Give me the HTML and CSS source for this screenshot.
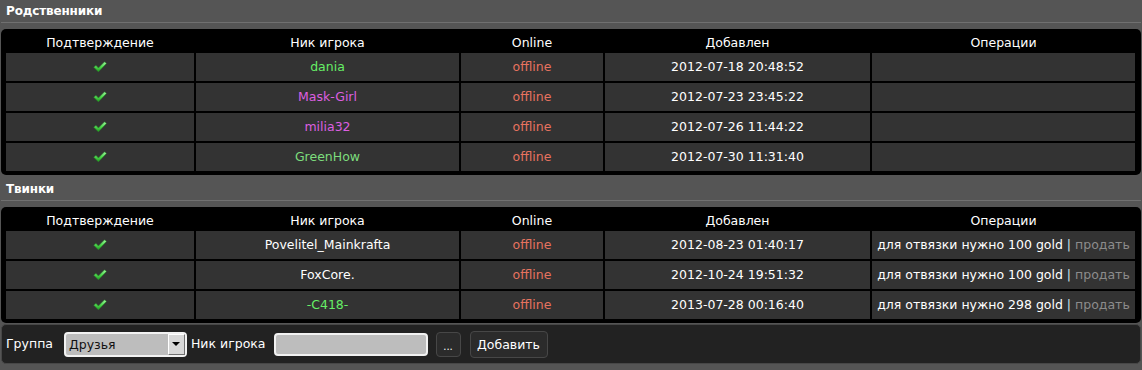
FILE: index.html
```html
<!DOCTYPE html>
<html lang="ru">
<head>
<meta charset="utf-8">
<title>Родственники</title>
<link rel="stylesheet" href="styles.css">
</head>
<body>
<svg width="0" height="0" class="defs" aria-hidden="true">
  <defs>
    <linearGradient id="gck" x1="0" y1="0" x2="0" y2="1">
      <stop offset="0" stop-color="#a6f7a6"/>
      <stop offset="0.5" stop-color="#4fd94f"/>
      <stop offset="1" stop-color="#1f9a1f"/>
    </linearGradient>
    <symbol id="check" viewBox="0 0 14 12">
      <path d="M0.8 6.2 L3 4.4 L5.4 7 L11.6 0.8 L13.4 2.6 L5.4 10.8 Z" fill="url(#gck)" stroke="#2a8f2a" stroke-width="0.6" stroke-linejoin="round"/>
    </symbol>
  </defs>
</svg>

<section class="section">
  <h2 class="title">Родственники</h2>
  <div class="box">
    <table class="grid">
      <colgroup><col class="c1"><col class="c2"><col class="c3"><col class="c4"><col class="c5"></colgroup>
      <thead><tr><th>Подтверждение</th><th>Ник игрока</th><th>Online</th><th>Добавлен</th><th>Операции</th></tr></thead>
      <tbody>
        <tr><td><svg class="ck"><use href="#check"/></svg></td><td class="n-green">dania</td><td class="off">offline</td><td>2012-07-18 20:48:52</td><td></td></tr>
        <tr><td><svg class="ck"><use href="#check"/></svg></td><td class="n-pink">Mask-Girl</td><td class="off">offline</td><td>2012-07-23 23:45:22</td><td></td></tr>
        <tr><td><svg class="ck"><use href="#check"/></svg></td><td class="n-pink">milia32</td><td class="off">offline</td><td>2012-07-26 11:44:22</td><td></td></tr>
        <tr><td><svg class="ck"><use href="#check"/></svg></td><td class="n-green2">GreenHow</td><td class="off">offline</td><td>2012-07-30 11:31:40</td><td></td></tr>
      </tbody>
    </table>
  </div>
</section>

<section class="section">
  <h2 class="title">Твинки</h2>
  <div class="box">
    <table class="grid">
      <colgroup><col class="c1"><col class="c2"><col class="c3"><col class="c4"><col class="c5"></colgroup>
      <thead><tr><th>Подтверждение</th><th>Ник игрока</th><th>Online</th><th>Добавлен</th><th>Операции</th></tr></thead>
      <tbody>
        <tr><td><svg class="ck"><use href="#check"/></svg></td><td>Povelitel_Mainkrafta</td><td class="off">offline</td><td>2012-08-23 01:40:17</td><td>для отвязки нужно 100 gold <span class="sep">|</span> <span class="sell">продать</span></td></tr>
        <tr><td><svg class="ck"><use href="#check"/></svg></td><td>FoxCore.</td><td class="off">offline</td><td>2012-10-24 19:51:32</td><td>для отвязки нужно 100 gold <span class="sep">|</span> <span class="sell">продать</span></td></tr>
        <tr><td><svg class="ck"><use href="#check"/></svg></td><td class="n-green">-C418-</td><td class="off">offline</td><td>2013-07-28 00:16:40</td><td>для отвязки нужно 298 gold <span class="sep">|</span> <span class="sell">продать</span></td></tr>
      </tbody>
    </table>
  </div>
  <form class="panel">
    <label class="lbl lbl-group">Группа</label>
    <div class="select"><span class="select-text">Друзья</span><span class="arrow"><span class="tri"></span></span></div>
    <label class="lbl lbl-nick">Ник игрока</label>
    <input class="field" type="text">
    <button class="btn btn-dots" type="button">...</button>
    <button class="btn btn-add" type="button">Добавить</button>
  </form>
</section>
</body>
</html>
```
FILE: styles.css
```css
html, body {
  margin: 0;
  padding: 0;
}
body {
  background: #555555;
  color: #ffffff;
  font-family: "DejaVu Sans", Verdana, sans-serif;
  font-size: 12.5px;
  line-height: 16px;
  width: 1142px;
  height: 370px;
  overflow: hidden;
}
.defs {
  position: absolute;
  width: 0;
  height: 0;
}
.section {
  margin: 0 0 3px;
}
.title {
  margin: 0 1px;
  padding: 3px 5px 3px;
  height: 16px;
  line-height: 16px;
  font-size: 12px;
  font-weight: bold;
  letter-spacing: -0.15px;
  color: #ffffff;
  border-bottom: 1px solid #707070;
}
.box {
  margin: 6px 1px 0;
  background: #000000;
  border-radius: 5px;
  padding: 0 3px 2px;
}
.grid {
  table-layout: fixed;
  border-collapse: separate;
  border-spacing: 2px;
  width: 1133px;
}
.c1 { width: 188px; }
.c2 { width: 263px; }
.c3 { width: 142px; }
.c4 { width: 265px; }
.c5 { width: 263px; }
.grid th {
  box-sizing: border-box;
  font-weight: normal;
  padding: 4px 0 0;
  height: 20px;
  line-height: 16px;
  text-align: center;
  vertical-align: top;
  color: #ffffff;
  white-space: nowrap;
}
.grid td {
  background: #333333;
  height: 28px;
  padding: 0;
  text-align: center;
  vertical-align: middle;
  white-space: nowrap;
  color: #ffffff;
}
.ck {
  display: block;
  width: 14px;
  height: 12px;
  margin: 0 auto;
}
.grid td.n-green { color: #66ee66; }
.grid td.n-green2 { color: #7ddd7d; }
.grid td.n-pink { color: #dd5fe0; }
.grid td.off { color: #e6725f; }
.sep { color: #cfe4f2; }
.sell { color: #8c8c8c; }

.panel {
  margin: 1px 1px 0;
  height: 38px;
  background: #222222;
  border: 1px solid #474747;
  border-radius: 5px;
  display: flex;
  align-items: center;
  padding: 0 0 0 4px;
}
.lbl {
  color: #ffffff;
  white-space: nowrap;
}
.lbl-group { margin-right: 11px; }
.select {
  box-sizing: border-box;
  width: 123px;
  height: 25px;
  background: #bdbdbd;
  border: 2px solid #f2f2f2;
  border-radius: 4px;
  display: flex;
  align-items: stretch;
  color: #111111;
}
.select-text {
  flex: 1;
  padding-left: 3px;
  line-height: 21px;
}
.arrow {
  box-sizing: border-box;
  width: 17px;
  background: #d8d8d8;
  border-top: 1px solid #ffffff;
  border-left: 1px solid #ffffff;
  border-right: 1px solid #707070;
  border-bottom: 1px solid #707070;
  display: flex;
  align-items: center;
  justify-content: center;
}
.tri {
  width: 0;
  height: 0;
  border-left: 4px solid transparent;
  border-right: 4px solid transparent;
  border-top: 4px solid #000000;
}
.lbl-nick { margin-left: 4px; margin-right: 8px; }
.field {
  box-sizing: border-box;
  width: 154px;
  height: 23px;
  background: #bdbdbd;
  border: 2px solid #f2f2f2;
  border-radius: 4px;
  padding: 0;
  margin: 0;
}
.btn {
  box-sizing: border-box;
  height: 25px;
  background: #2b2b2b;
  border: 1px solid #474747;
  border-radius: 4px;
  color: #ffffff;
  font-family: "DejaVu Sans", Verdana, sans-serif;
  font-size: 12.5px;
  padding: 0;
  margin: 0;
}
.btn-dots {
  width: 25px;
  margin-left: 8px;
  font-size: 10px;
  line-height: 10px;
  padding-top: 6px;
}
.btn-add {
  width: 78px;
  height: 27px;
  margin-left: 9px;
}
```
